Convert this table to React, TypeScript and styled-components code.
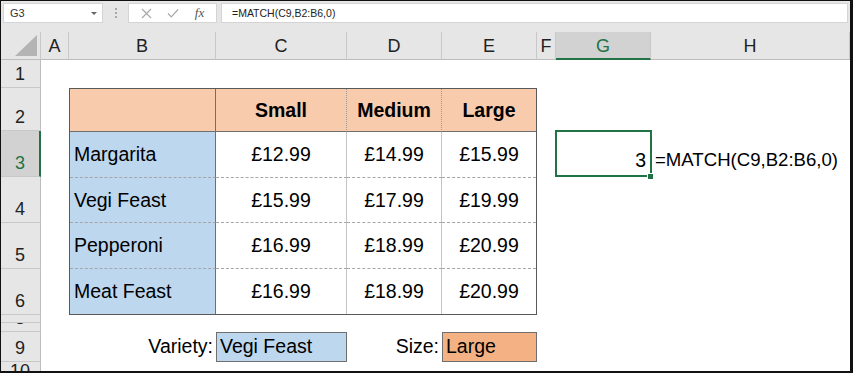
import styled, { createGlobalStyle } from 'styled-components';

const GlobalStyle = createGlobalStyle`
  html, body {
    margin: 0;
    padding: 0;
    background: #fff;
  }
  body {
    font-family: "Liberation Sans", Arial, sans-serif;
  }
`;

const GREEN = '#217346';

const Frame = styled.div`
  width: 853px;
  height: 373px;
  box-sizing: border-box;
  border-style: solid;
  border-color: #111;
  border-width: 1px 3px 2px 1px;
  overflow: hidden;
  display: flex;
  flex-direction: column;
  background: #fff;
`;

/* ---------- formula bar ---------- */

const Bar = styled.div`
  display: flex;
  height: 31px;
  flex: none;
  box-sizing: border-box;
  padding: 2px 2px 9px 2px;
  background: #e6e6e6;
`;

const NameBox = styled.div`
  width: 100px;
  box-sizing: border-box;
  background: #fff;
  border: 1px solid #d4d4d4;
  display: flex;
  align-items: center;
  justify-content: space-between;
  padding: 0 5px 0 6px;
  font-size: 11px;
  color: #333;
`;

const Arrow = styled.span`
  width: 0;
  height: 0;
  border-left: 3px solid transparent;
  border-right: 3px solid transparent;
  border-top: 3px solid #666;
`;

const Grip = styled.div`
  width: 25px;
  display: flex;
  flex-direction: column;
  align-items: center;
  justify-content: center;
  gap: 2px;

  span {
    width: 2px;
    height: 2px;
    background: #a8a8a8;
  }
`;

const FxBox = styled.div`
  width: 89px;
  margin-right: 4px;
  box-sizing: border-box;
  background: #fff;
  border: 1px solid #d4d4d4;
  display: flex;
  align-items: center;
  justify-content: space-around;
  padding: 0 4px;
`;

const Fx = styled.span`
  font-family: "Liberation Serif", "Times New Roman", serif;
  font-style: italic;
  font-size: 13px;
  color: #555;
`;

const FormulaInput = styled.div`
  flex: 1;
  box-sizing: border-box;
  background: #fff;
  border: 1px solid #d4d4d4;
  display: flex;
  align-items: center;
  padding-left: 10px;
  font-size: 10.5px;
  color: #222;
`;

/* ---------- sheet grid ---------- */

const Sheet = styled.div`
  flex: 1;
  display: grid;
  grid-template-columns: 40px 28px 147px 131px 95px 95px 19px 95px 1fr;
  grid-template-rows: 28px 28px 43px 46px 46px 46px 46px 8px 9px 30px 1fr;
`;

const Corner = styled.div`
  grid-column: 1;
  grid-row: 1;
  background: #e6e6e6;
  border-right: 1px solid #c8c8c8;
  border-bottom: 1px solid #bdbdbd;
  display: flex;
  align-items: flex-end;
  justify-content: flex-end;
  padding: 0 3px 3px 0;
`;

const ColHead = styled.div<{ $col: number; $active?: boolean }>`
  grid-column: ${(p) => p.$col};
  grid-row: 1;
  box-sizing: border-box;
  background: ${(p) => (p.$active ? '#d2d2d2' : '#e6e6e6')};
  color: ${(p) => (p.$active ? GREEN : '#222')};
  border-right: 1px solid #c8c8c8;
  border-bottom: ${(p) => (p.$active ? `2px solid ${GREEN}` : '1px solid #bdbdbd')};
  display: flex;
  align-items: center;
  justify-content: center;
  font-size: 18px;
  line-height: 1;
  padding-top: ${(p) => (p.$active ? '1px' : '0')};
  overflow: hidden;
`;

const RowHead = styled.div<{ $row: number; $active?: boolean }>`
  grid-column: 1;
  grid-row: ${(p) => p.$row};
  box-sizing: border-box;
  background: ${(p) => (p.$active ? '#d2d2d2' : '#e6e6e6')};
  color: ${(p) => (p.$active ? GREEN : '#222')};
  border-right: ${(p) => (p.$active ? `2px solid ${GREEN}` : '1px solid #bdbdbd')};
  border-bottom: 1px solid #c8c8c8;
  display: flex;
  align-items: flex-end;
  justify-content: center;
  font-size: 18px;
  line-height: 1;
  padding: 0 ${(p) => (p.$active ? '0' : '1px')} 4px 0;
  overflow: hidden;
`;

/* ---------- price table ---------- */

const Table = styled.div`
  grid-column: 3 / 7;
  grid-row: 3 / 8;
  box-sizing: border-box;
  border: 1px solid #595959;
  display: grid;
  grid-template-columns: 146px 131px 95px 1fr;
  grid-template-rows: 43px repeat(4, 1fr);
  font-size: 19.5px;
  line-height: 1;
  color: #000;
`;

type CellProps = {
  $head?: boolean;
  $name?: boolean;
  $lastCol?: boolean;
  $lastRow?: boolean;
};

const Cell = styled.div<CellProps>`
  box-sizing: border-box;
  display: flex;
  align-items: center;
  justify-content: ${(p) => (p.$name ? 'flex-start' : 'center')};
  padding: 1px 0 0 ${(p) => (p.$name ? '4px' : '0')};
  font-weight: ${(p) => (p.$head ? 700 : 400)};
  background: ${(p) => (p.$head ? '#f8cbad' : p.$name ? '#bdd7ee' : '#fff')};
  border-right: ${(p) =>
    p.$lastCol ? 'none' : p.$name ? '1px solid #6f6f6f' : p.$head ? '1px dotted #9a9a9a' : '1px solid #c4c4c4'};
  border-bottom: ${(p) =>
    p.$lastRow ? 'none' : p.$head ? '1px solid #6f6f6f' : '1px dashed #a6a6a6'};
`;

/* ---------- free cells ---------- */

const Selected = styled.div`
  grid-column: 8;
  grid-row: 4;
  position: relative;
  display: flex;
  align-items: flex-end;
  justify-content: flex-end;
  padding: 0 5px 7px 0;
  font-size: 19.5px;
  line-height: 1;

  &::after {
    content: "";
    position: absolute;
    inset: -1px -1px 0 -1px;
    border: 2px solid ${GREEN};
  }
`;

const FillHandle = styled.span`
  position: absolute;
  right: -3px;
  bottom: -3px;
  width: 5px;
  height: 5px;
  background: ${GREEN};
  border: 1px solid #fff;
  z-index: 1;
`;

const FormulaText = styled.div`
  grid-column: 9;
  grid-row: 4;
  display: flex;
  align-items: flex-end;
  padding: 0 0 7px 4px;
  font-size: 18.6px;
  line-height: 1;
  white-space: nowrap;
  overflow: hidden;
`;

const Label = styled.div<{ $col: number }>`
  grid-column: ${(p) => p.$col};
  grid-row: 10;
  display: flex;
  align-items: center;
  justify-content: flex-end;
  padding: 0 3px 1px 0;
  font-size: 19.5px;
  line-height: 1;
`;

const InputBox = styled.div<{ $col: number; $fill: string }>`
  grid-column: ${(p) => p.$col};
  grid-row: 10;
  box-sizing: border-box;
  height: 30px;
  background: ${(p) => p.$fill};
  border: 1px solid #6f6f6f;
  display: flex;
  align-items: center;
  padding: 0 0 1px 3px;
  font-size: 19.5px;
  line-height: 1;
`;

const columns = ['A', 'B', 'C', 'D', 'E', 'F', 'G', 'H'];
const rows = ['1', '2', '3', '4', '5', '6', '7', '8', '9', '10'];

const pizzas = [
  { name: 'Margarita', prices: ['£12.99', '£14.99', '£15.99'] },
  { name: 'Vegi Feast', prices: ['£15.99', '£17.99', '£19.99'] },
  { name: 'Pepperoni', prices: ['£16.99', '£18.99', '£20.99'] },
  { name: 'Meat Feast', prices: ['£16.99', '£18.99', '£20.99'] },
];

const sizes = ['Small', 'Medium', 'Large'];

export default function App() {
  return (
    <>
      <GlobalStyle />
      <Frame>
        <Bar>
          <NameBox>
            G3
            <Arrow />
          </NameBox>
          <Grip>
            <span />
            <span />
            <span />
          </Grip>
          <FxBox>
            <svg width="11" height="11" viewBox="0 0 11 11">
              <path d="M1 1L10 10M10 1L1 10" stroke="#a9a9a9" strokeWidth="1.2" fill="none" />
            </svg>
            <svg width="12" height="10" viewBox="0 0 12 10">
              <path d="M1 5.5L4.3 8.8L11 1.5" stroke="#a9a9a9" strokeWidth="1.2" fill="none" />
            </svg>
            <Fx>fx</Fx>
          </FxBox>
          <FormulaInput>=MATCH(C9,B2:B6,0)</FormulaInput>
        </Bar>

        <Sheet>
          <Corner>
            <svg width="22" height="21" viewBox="0 0 22 21">
              <path d="M22 0V21H0Z" fill="#b4b4b4" />
            </svg>
          </Corner>
          {columns.map((c, i) => (
            <ColHead key={c} $col={i + 2} $active={c === 'G'}>
              {c}
            </ColHead>
          ))}
          {rows.map((r, i) => (
            <RowHead key={r} $row={i + 2} $active={r === '3'}>
              {r}
            </RowHead>
          ))}

          <Table>
            <Cell $head $name />
            {sizes.map((s, i) => (
              <Cell key={s} $head $lastCol={i === 2}>
                {s}
              </Cell>
            ))}
            {pizzas.flatMap((p, r) => [
              <Cell key={p.name} $name $lastRow={r === 3}>
                {p.name}
              </Cell>,
              ...p.prices.map((price, i) => (
                <Cell key={p.name + i} $lastCol={i === 2} $lastRow={r === 3}>
                  {price}
                </Cell>
              )),
            ])}
          </Table>

          <Selected>
            3
            <FillHandle />
          </Selected>
          <FormulaText>=MATCH(C9,B2:B6,0)</FormulaText>

          <Label $col={3}>Variety:</Label>
          <InputBox $col={4} $fill="#bdd7ee">Vegi Feast</InputBox>
          <Label $col={5}>Size:</Label>
          <InputBox $col={6} $fill="#f4b183">Large</InputBox>
        </Sheet>
      </Frame>
    </>
  );
}
